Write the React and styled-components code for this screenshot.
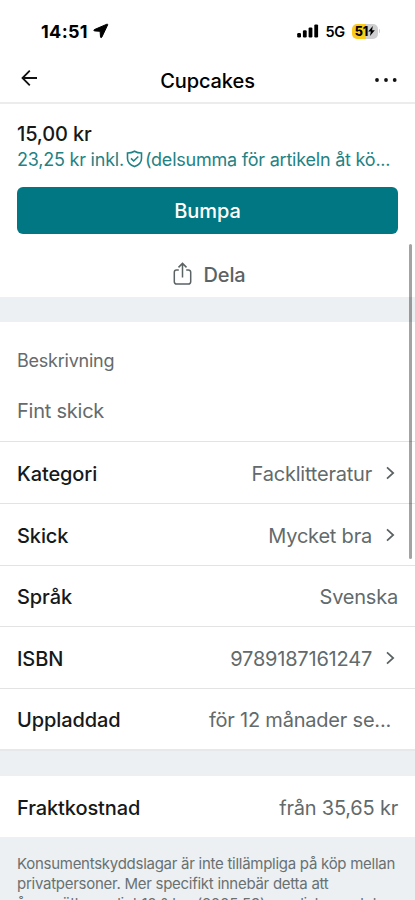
import React from "react";
import styled, { createGlobalStyle } from "styled-components";

const GlobalStyle = createGlobalStyle`
    * {
        box-sizing: border-box;
    }

    html, body {
        margin: 0;
        background: #fff;
        overflow: hidden;
    }
`;

const Screen = styled.div`
    position: relative;
    display: flex;
    flex-direction: column;
    width: 415px;
    height: 900px;
    overflow: hidden;
    background: #fff;
    color: #15191a;
    font-family: Inter, sans-serif;
    font-size: 20px;
`;

const StatusBar = styled.header`
    display: flex;
    flex: none;
    justify-content: space-between;
    align-items: center;
    height: 57px;
    padding: 5px 35px 0 41px;
    color: #000;
`;

const StatusGroup = styled.div`
    display: flex;
    align-items: center;
`;

const Clock = styled.span`
    margin-right: 5px;
    font-size: 18px;
    font-weight: 700;
    letter-spacing: 0.35px;
`;

const Network = styled.span`
    margin: 1px 7px 0 6px;
    font-size: 14.5px;
    font-weight: 600;
    letter-spacing: -0.2px;
`;

const Battery = styled.div`
    display: flex;
    align-items: center;
    justify-content: center;
    width: 26px;
    height: 15px;
    border-radius: 5px;
    background: linear-gradient(90deg, #fbcb1c 52%, #cfcfd1 52%);
    font-size: 12.5px;
    font-weight: 800;
`;

const BatteryCap = styled.div`
    width: 1px;
    height: 4px;
    margin-left: 1px;
    border-radius: 0 2px 2px 0;
    background: #d3d3d5;
`;

const NavBar = styled.nav`
    display: grid;
    flex: none;
    grid-template-columns: 40px 1fr 40px;
    align-items: center;
    height: 47px;
    padding: 0 17px;
    border-bottom: 2px solid #ececec;
    color: #000;

    svg:first-child {
        margin-bottom: 3px;
    }

    svg:last-child {
        justify-self: end;
    }
`;

const Title = styled.h1`
    margin: 2px 0 0;
    font-size: 20px;
    font-weight: 500;
    line-height: 24px;
    letter-spacing: -0.1px;
    text-align: center;
`;

const Summary = styled.section`
    flex: none;
    height: 193px;
    padding: 18px 17px 0;
`;

const Price = styled.div`
    font-size: 20px;
    font-weight: 500;
    line-height: 24px;
    letter-spacing: -0.15px;
`;

const TotalPrice = styled.div`
    display: flex;
    align-items: center;
    height: 26px;
    color: #1f8284;
    font-size: 18px;
    letter-spacing: -0.22px;
    white-space: nowrap;

    svg {
        flex: none;
        margin: 0 2px 1px;
    }
`;

const BumpButton = styled.button`
    display: block;
    width: 100%;
    height: 47px;
    margin-top: 15px;
    padding: 0;
    border: 0;
    border-radius: 6px;
    background: #007782;
    color: #fff;
    font: 500 20px/48px Inter, sans-serif;
    letter-spacing: -0.1px;
`;

const ShareButton = styled.button`
    display: flex;
    align-items: center;
    justify-content: center;
    gap: 12px;
    width: 100%;
    height: 63px;
    padding: 17px 0 0 3px;
    border: 0;
    background: none;
    color: #5b6364;
    font: 500 20px/24px Inter, sans-serif;
    letter-spacing: -0.2px;

    span {
        padding-top: 1px;
    }
`;

const Gap = styled.div`
    flex: none;
    height: ${(props) => props.$height}px;
    border-top: ${(props) => (props.$line ? "2px solid #e6e8e9" : "0")};
    background: #ecf0f2;
`;

const Description = styled.section`
    flex: none;
    height: 120px;
    padding: 28px 17px 0;
    border-bottom: 1px solid #e3e3e3;
    color: #646b6d;
    letter-spacing: -0.23px;
`;

const Heading = styled.div`
    font-size: 18px;
    line-height: 22px;
`;

const Body = styled.p`
    margin: 26px 0 0;
    font-size: 20px;
    line-height: 26px;
`;

const Row = styled.div`
    display: flex;
    flex: none;
    align-items: center;
    height: ${(props) => props.$height}px;
    padding: 2px 17px 0;
    border-bottom: ${(props) => (props.$last ? "0" : "1px solid #e3e3e3")};
`;

const Label = styled.span`
    font-weight: 500;
    letter-spacing: -0.1px;
`;

const Value = styled.span`
    margin-left: auto;
    padding-right: ${(props) => props.$inset || 0}px;
    color: #626a6c;
    letter-spacing: -0.21px;
    white-space: nowrap;
`;

const LinkIcon = styled.span`
    display: flex;
    width: 26px;
    padding: 0 3px 1px 14px;
`;

const Legal = styled.footer`
    flex: 1;
    padding: 17px 17px 0;
    background: #ecf0f2;
    color: #697072;
    font-size: 15px;
    line-height: 20px;
    letter-spacing: -0.27px;
    white-space: nowrap;
`;

const ScrollThumb = styled.div`
    position: absolute;
    top: 244px;
    right: 3px;
    width: 3px;
    height: 315px;
    border-radius: 2px;
    background: rgba(0, 0, 0, 0.36);
`;

const details = [
    { label: "Kategori", value: "Facklitteratur", link: true, height: 62 },
    { label: "Skick", value: "Mycket bra", link: true, height: 62 },
    { label: "Språk", value: "Svenska", height: 61 },
    { label: "ISBN", value: "9789187161247", link: true, height: 62 },
    { label: "Uppladdad", value: "för 12 månader se...", inset: 7, height: 60, last: true },
];

const Chevron = () => (
    <svg width="9" height="16" viewBox="0 0 9 16" fill="none" stroke="#596163" strokeWidth="1.7">
        <path d="M1 2.3 7.2 8 1 13.7" />
    </svg>
);

const LocationIcon = () => (
    <svg width="16" height="16" viewBox="0 0 16 16" fill="#000" stroke="#000" strokeWidth="1" strokeLinejoin="round">
        <path d="M13.9 1.2 1.4 6.6c-.9.4-.7 1.2.2 1.3l5.5.4.4 5.6c.1.9 1 1 1.4.1L14.6 2c.3-.7-.1-1-.7-.8Z" />
    </svg>
);

const SignalIcon = () => (
    <svg width="22" height="14" viewBox="0 0 22 14" fill="#000">
        <rect x="0.2" y="9" width="3.8" height="4.5" rx="1.2" />
        <rect x="5.9" y="6.3" width="3.8" height="7.2" rx="1.2" />
        <rect x="11.6" y="3.4" width="3.8" height="10.1" rx="1.2" />
        <rect x="17.3" y="0.4" width="3.8" height="13.1" rx="1.2" />
    </svg>
);

const BoltIcon = () => (
    <svg width="7" height="10" viewBox="0 0 7 10" fill="#000">
        <path d="M4.8 0 .2 5.5h2.6L2 10l4.8-5.8H4.1Z" />
    </svg>
);

const BackIcon = () => (
    <svg width="24" height="24" viewBox="0 0 24 24" fill="none" stroke="#111" strokeWidth="1.8">
        <path d="M20 12H5.5M12.8 4.7 5.5 12l7.3 7.3" />
    </svg>
);

const MoreIcon = () => (
    <svg width="24" height="6" viewBox="0 0 24 6" fill="#111">
        <circle cx="3" cy="3" r="1.9" />
        <circle cx="12" cy="3" r="1.9" />
        <circle cx="20.7" cy="3" r="1.9" />
    </svg>
);

const ShieldIcon = () => (
    <svg width="17" height="18" viewBox="0 0 17 18" fill="none" stroke="#1f8284" strokeWidth="1.6">
        <path d="M8.5 1.2c2 1.2 4.4 1.8 7 1.8v5.4c0 4-2.7 6.5-7 8.2-4.3-1.7-7-4.2-7-8.2V3c2.6 0 5-.6 7-1.8Z" />
        <path d="m5 8.4 2.7 2.6 4.6-4.5" />
    </svg>
);

const ShareIcon = () => (
    <svg width="19" height="24" viewBox="0 0 19 24" fill="none" stroke="#5b6364" strokeWidth="1.5">
        <path d="M5.8 8H3.5a2.2 2.2 0 0 0-2.2 2.2v9.6A2.2 2.2 0 0 0 3.5 22h12a2.2 2.2 0 0 0 2.2-2.2v-9.6A2.2 2.2 0 0 0 15.5 8h-2.3" />
        <path d="M9.5 15.5V1.8M5.5 5.4l4-4 4 4" />
    </svg>
);

const DetailRow = ({ item }) => (
    <Row $height={item.height} $last={item.last}>
        <Label>{item.label}</Label>
        <Value $inset={item.inset}>{item.value}</Value>
        {item.link && <LinkIcon><Chevron /></LinkIcon>}
    </Row>
);

const App = () => {
    return (
        <Screen>
            <GlobalStyle />
            <StatusBar>
                <StatusGroup>
                    <Clock>14:51</Clock>
                    <LocationIcon />
                </StatusGroup>
                <StatusGroup>
                    <SignalIcon />
                    <Network>5G</Network>
                    <Battery>51<BoltIcon /></Battery>
                    <BatteryCap />
                </StatusGroup>
            </StatusBar>
            <NavBar>
                <BackIcon />
                <Title>Cupcakes</Title>
                <MoreIcon />
            </NavBar>
            <Summary>
                <Price>15,00 kr</Price>
                <TotalPrice>
                    <span>23,25 kr inkl.</span>
                    <ShieldIcon />
                    <span>(delsumma för artikeln åt kö...</span>
                </TotalPrice>
                <BumpButton>Bumpa</BumpButton>
                <ShareButton>
                    <ShareIcon />
                    <span>Dela</span>
                </ShareButton>
            </Summary>
            <Gap $height={25} />
            <Description>
                <Heading>Beskrivning</Heading>
                <Body>Fint skick</Body>
            </Description>
            {details.map((item) => (
                <DetailRow key={item.label} item={item} />
            ))}
            <Gap $height={27} $line />
            <DetailRow item={{ label: "Fraktkostnad", value: "från 35,65 kr", height: 61, last: true }} />
            <Legal>
                Konsumentskyddslagar är inte tillämpliga på köp mellan<br />
                privatpersoner. Mer specifikt innebär detta att<br />
                ångerrätten enligt 10 § lag (2005:59) om distansavtal
            </Legal>
            <ScrollThumb />
        </Screen>
    );
};

export default App;
